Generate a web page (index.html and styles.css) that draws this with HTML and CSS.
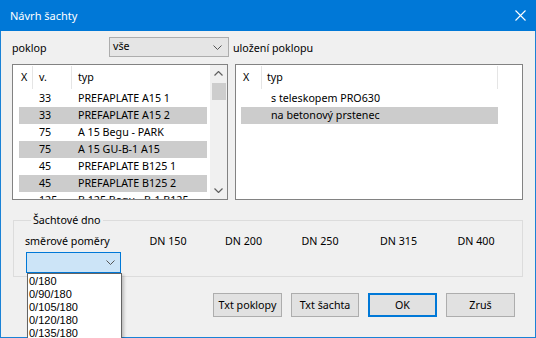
FILE: index.html
```html
<!DOCTYPE html>
<html lang="cs">
<head>
<meta charset="utf-8">
<title>Návrh šachty</title>
<link rel="stylesheet" href="styles.css">
</head>
<body>
<div class="window">
  <div class="titlebar">
    <span class="title">Návrh šachty</span>
    <svg class="close" width="11" height="11" viewBox="0 0 11 11"><path d="M0.5 0.5 L10.5 10.5 M10.5 0.5 L0.5 10.5" stroke="#fff" stroke-width="1.1" fill="none"/></svg>
  </div>
  <div class="content">
    <div class="toprow">
      <span class="lbl-poklop">poklop</span>
      <div class="combo">
        <span>vše</span>
        <svg class="chev" width="9" height="5" viewBox="0 0 9 5"><polyline points="0.5,0.5 4.5,4.5 8.5,0.5" fill="none" stroke="#555" stroke-width="1"/></svg>
      </div>
      <span class="lbl-ulozeni">uložení poklopu</span>
    </div>

    <div class="lists">
      <div class="list list-left">
        <div class="list-body">
          <div class="hdr">
            <span class="hc hc-x">X</span>
            <span class="hc hc-v">v.</span>
            <span class="hc hc-typ">typ</span>
          </div>
          <div class="row"><span class="c-x"></span><span class="c-v">33</span><span class="c-typ">PREFAPLATE A15 1</span></div>
          <div class="row sel"><span class="c-x"></span><span class="c-v">33</span><span class="c-typ">PREFAPLATE A15 2</span></div>
          <div class="row"><span class="c-x"></span><span class="c-v">75</span><span class="c-typ">A 15 Begu - PARK</span></div>
          <div class="row sel"><span class="c-x"></span><span class="c-v">75</span><span class="c-typ">A 15 GU-B-1 A15</span></div>
          <div class="row"><span class="c-x"></span><span class="c-v">45</span><span class="c-typ">PREFAPLATE B125 1</span></div>
          <div class="row sel"><span class="c-x"></span><span class="c-v">45</span><span class="c-typ">PREFAPLATE B125 2</span></div>
          <div class="row"><span class="c-x"></span><span class="c-v">125</span><span class="c-typ">B 125 Begu - B-1 B125</span></div>
        </div>
        <div class="scrollbar">
          <div class="sb-btn"><svg width="9" height="5" viewBox="0 0 9 5"><polyline points="0.5,4.5 4.5,0.5 8.5,4.5" fill="none" stroke="#606060" stroke-width="1.2"/></svg></div>
          <div class="sb-track"><div class="sb-thumb"></div></div>
          <div class="sb-btn"><svg width="9" height="5" viewBox="0 0 9 5"><polyline points="0.5,0.5 4.5,4.5 8.5,0.5" fill="none" stroke="#606060" stroke-width="1.2"/></svg></div>
        </div>
      </div>

      <div class="list list-right">
        <div class="list-body">
          <div class="hdr hdr-r">
            <span class="hc rc-x">X</span>
            <span class="hc rc-typ">typ</span>
          </div>
          <div class="row row-r"><span class="r-x"></span><span class="r-typ">s teleskopem PRO630</span></div>
          <div class="row row-r sel"><span class="r-x"></span><span class="r-typ">na betonový prstenec</span></div>
        </div>
      </div>
    </div>

    <fieldset class="group">
      <legend>Šachtové dno</legend>
      <div class="dn-row">
        <span class="dn-lbl">směrové poměry</span>
        <span class="dn">DN 150</span>
        <span class="dn">DN 200</span>
        <span class="dn">DN 250</span>
        <span class="dn">DN 315</span>
        <span class="dn">DN 400</span>
      </div>
      <div class="combo2">
        <svg class="chev" width="9" height="5" viewBox="0 0 9 5"><polyline points="0.5,0.5 4.5,4.5 8.5,0.5" fill="none" stroke="#555" stroke-width="1"/></svg>
      </div>
    </fieldset>

    <div class="buttons">
      <button class="btn b1">Txt poklopy</button>
      <button class="btn b2">Txt šachta</button>
      <button class="btn b3 default">OK</button>
      <button class="btn b4">Zruš</button>
    </div>
  </div>

  <div class="popup">
    <div class="opt">0/180</div>
    <div class="opt">0/90/180</div>
    <div class="opt">0/105/180</div>
    <div class="opt">0/120/180</div>
    <div class="opt">0/135/180</div>
  </div>
</div>
</body>
</html>
```

FILE: styles.css
```css
* { box-sizing: border-box; }
html, body { margin: 0; padding: 0; }
body {
  width: 536px;
  height: 338px;
  overflow: hidden;
  background: #f0f0f0;
  font-family: "Noto Sans", sans-serif;
  font-size: 10.7px;
  color: #000;
}
.window {
  position: relative;
  width: 536px;
  height: 338px;
  border: 1px solid #1a82d6;
  border-top: 0;
  background: #f0f0f0;
  display: flex;
  flex-direction: column;
}
.titlebar {
  height: 31px;
  margin: 0 -1px;
  background: #0078d7;
  color: #fff;
  display: flex;
  align-items: center;
  justify-content: space-between;
  padding: 0 10px 0 10px;
  flex: none;
}
.title { font-size: 11px; line-height: 14px; }
.close { display: block; }

.content {
  padding: 6px 12px 0 11px;
  display: flex;
  flex-direction: column;
}

.toprow {
  height: 20px;
  display: flex;
  align-items: center;
}
.lbl-poklop { width: 97px; line-height: 14px; padding-top: 1px; }
.combo {
  width: 120px;
  height: 20px;
  background: #e5e5e5;
  border: 1px solid #adadad;
  display: flex;
  align-items: center;
  justify-content: space-between;
  padding: 0 6px 0 3px;
}
.combo span { line-height: 14px; margin-top: -3px; }
.chev { display: block; }
.lbl-ulozeni { margin-left: 4px; line-height: 14px; padding-top: 1px; }

.lists {
  margin-top: 7px;
  height: 136px;
  display: flex;
  gap: 7px;
}
.list {
  border: 1px solid #828282;
  background: #fff;
  display: flex;
  overflow: hidden;
}
.list-left { width: 216px; }
.list-right { width: 288px; }
.list-body {
  flex: 1;
  overflow: hidden;
}
.hdr {
  height: 25px;
  display: flex;
  align-items: center;
}
.hc {
  height: 23px;
  line-height: 22px;
  border-right: 1px solid #e5e5e5;
}
.hc-x { width: 20px; padding-left: 8px; }
.hc-v { width: 39px; padding-left: 6px; }
.hc-typ { width: 135px; padding-left: 6px; border-right: 0; }
.row {
  height: 17px;
  line-height: 17px;
  display: flex;
  margin-left: 6px;
  width: 188px;
  white-space: nowrap;
}
.row.sel { background: #cccccc; }
.c-x { width: 14px; }
.c-v { width: 45px; padding-left: 6px; }
.c-typ { flex: 1; padding-left: 0; }

.scrollbar {
  width: 17px;
  background: #f0f0f0;
  display: flex;
  flex-direction: column;
}
.sb-btn {
  height: 17px;
  display: flex;
  align-items: center;
  justify-content: center;
  flex: none;
}
.sb-track { flex: 1; padding: 1px 1px 0 2px; }
.sb-thumb { height: 17px; background: #cdcdcd; }

.hdr-r .rc-x { width: 26px; padding-left: 7px; }
.hdr-r .rc-typ { width: 236px; padding-left: 5px; }
.row-r { margin-left: 5px; width: 257px; }
.r-x { width: 21px; }
.r-typ { flex: 1; padding-left: 9px; }

.group {
  margin: 13px 0 0 1px;
  padding: 7px 0 3px 11px;
  border: 1px solid #dcdcdc;
  min-width: 0;
}
.group legend {
  margin-left: 6px;
  padding: 0 2px;
  line-height: 14px;
}
.dn-row {
  display: grid;
  grid-template-columns: 105px 76px 75px 78px 79px 76px;
  line-height: 14px;
}
.dn { text-align: center; }
.combo2 {
  margin: 4px 0 0 1px;
  width: 95px;
  height: 21px;
  background: #cce4f7;
  border: 1px solid #0078d7;
  display: flex;
  align-items: center;
  justify-content: flex-end;
  padding-right: 5px;
}

.buttons {
  margin-top: 16px;
  display: flex;
  justify-content: flex-end;
  gap: 9px;
  padding-right: 8px;
}
.btn {
  height: 24px;
  width: 69px;
  background: #e1e1e1;
  border: 1px solid #adadad;
  font-family: "Noto Sans", sans-serif;
  font-size: 10.7px;
  color: #000;
  padding: 0;
  line-height: 20px;
}
.b2 { width: 68px; }
.btn.default { border: 2px solid #0078d7; }

.popup {
  position: absolute;
  left: 26px;
  top: 273px;
  width: 95px;
  height: 70px;
  background: #fff;
  border: 1px solid #646464;
  box-shadow: 2px 2px 3px rgba(0,0,0,0.22);
  padding: 1px 0 0 1px;
  font-family: "Liberation Sans", sans-serif;
  font-size: 11px;
}
.opt { height: 13px; line-height: 13px; }
```
